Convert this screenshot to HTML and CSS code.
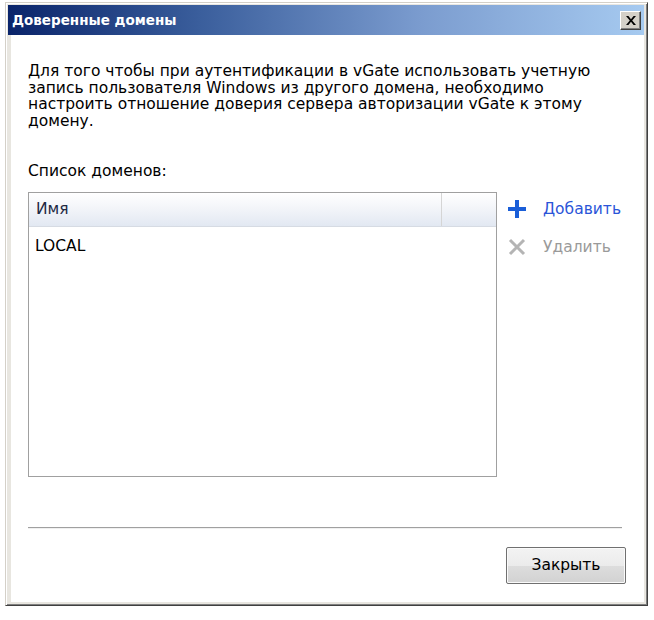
FILE: index.html
```html
<!DOCTYPE html>
<html lang="ru">
<head>
<meta charset="utf-8">
<title>Доверенные домены</title>
<link rel="stylesheet" href="styles.css">
</head>
<body>
<div class="window">
  <div class="titlebar">
    <span class="title">Доверенные домены</span>
    <span class="close-x">
      <svg width="10" height="9" viewBox="0 0 10 9"><path d="M0 0h2.4l2.6 3.2L7.6 0H10L6.2 4.5 10 9H7.6L5 5.8 2.4 9H0l3.8-4.5z" fill="#000"/></svg>
    </span>
  </div>
  <div class="client">
    <p class="intro">Для того чтобы при аутентификации в vGate использовать учетную<br>запись пользователя Windows из другого домена, необходимо<br>настроить отношение доверия сервера авторизации vGate к этому<br>домену.</p>
    <div class="label">Список доменов:</div>
    <div class="list-row">
      <div class="listbox">
        <div class="list-header">
          <div class="col-name">Имя</div>
          <div class="col-rest"></div>
        </div>
        <div class="list-item">LOCAL</div>
      </div>
      <div class="actions">
        <div class="action add">
          <svg width="18" height="18" viewBox="0 0 18 18"><rect x="7" y="0" width="4" height="18" fill="#1a5ed8"/><rect x="0" y="7" width="18" height="4" fill="#1a5ed8"/></svg>
          <span>Добавить</span>
        </div>
        <div class="action remove">
          <svg width="18" height="18" viewBox="0 0 18 18"><path d="M2 2L16 16M16 2L2 16" stroke="#b4b4b4" stroke-width="3"/></svg>
          <span>Удалить</span>
        </div>
      </div>
    </div>
    <div class="separator"></div>
    <div class="footer">
      <button class="btn">Закрыть</button>
    </div>
  </div>
</div>
</body>
</html>
```

FILE: styles.css
```css
html, body {
  margin: 0;
  padding: 0;
  background: #ffffff;
}
body {
  font-family: "DejaVu Sans", Verdana, sans-serif;
  font-size: 15.5px;
  color: #000;
}
.window {
  margin: 2px 0 0 5px;
  width: 643px;
  height: 604px;
  box-sizing: border-box;
  border: 1px solid;
  border-color: #d4d0c8 #404040 #404040 #d4d0c8;
  box-shadow: inset 1px 1px #ffffff, inset -1px -1px #808080;
  padding: 2px 3px 3px 2px;
  background: #e8e6e0;
  display: flex;
  flex-direction: column;
}
.titlebar {
  height: 30px;
  flex: none;
  background: linear-gradient(to right, #0a246a 0%, #3a5e9c 30%, #7b9ccf 65%, #a6caf0 100%);
  display: flex;
  align-items: center;
  justify-content: space-between;
  padding: 0 3px 0 4px;
}
.title {
  color: #fff;
  font-weight: bold;
  font-size: 13.5px;
}
.close-x {
  width: 19px;
  height: 17px;
  background: #d4d0c8;
  border: 1px solid;
  border-color: #fff #404040 #404040 #fff;
  box-shadow: inset -1px -1px #808080;
  display: flex;
  align-items: center;
  justify-content: center;
}
.client {
  flex: 1;
  background: #fff;
  margin-left: 3px;
  padding: 28px 19px 0 17px;
  display: flex;
  flex-direction: column;
}
.intro {
  margin: 0;
  line-height: 16.5px;
  white-space: nowrap;
}
.label {
  margin-top: 34px;
  line-height: 16.5px;
}
.list-row {
  margin-top: 12px;
  display: flex;
  gap: 11px;
}
.listbox {
  width: 467px;
  height: 283px;
  border: 1px solid #a0a0a0;
  background: #fff;
}
.list-header {
  height: 33px;
  display: flex;
  background: linear-gradient(to bottom, #ffffff 0%, #f3f5f9 45%, #e2e8f2 100%);
  border-bottom: 1px solid #d6dbe3;
}
.col-name {
  width: 405px;
  border-right: 1px solid #d5d5d5;
  padding-left: 7px;
  display: flex;
  align-items: center;
  color: #1e2a44;
}
.col-rest { flex: 1; }
.list-item {
  padding: 10px 0 0 6px;
}
.actions {
  display: flex;
  flex-direction: column;
  gap: 20px;
  padding-top: 8px;
}
.action {
  display: flex;
  align-items: center;
  gap: 17px;
}
.action.add span { color: #2b55d8; }
.action.remove span { color: #9a9a9a; }
.separator {
  margin-top: 50px;
  height: 1px;
  background: #a0a0a0;
  border-bottom: 1px solid #f0f0f0;
  width: 594px;
}
.footer {
  display: flex;
  justify-content: flex-end;
  margin-top: 18px;
}
.btn {
  width: 120px;
  height: 37px;
  font-family: inherit;
  font-size: 15.5px;
  color: #000;
  border: 1px solid #707070;
  border-radius: 2px;
  box-shadow: inset 0 0 0 1px #fafafa;
  background: linear-gradient(to bottom, #f3f3f3 0%, #ebebeb 50%, #dddddd 51%, #d2d2d2 100%);
  margin-right: -1px;
}
```
